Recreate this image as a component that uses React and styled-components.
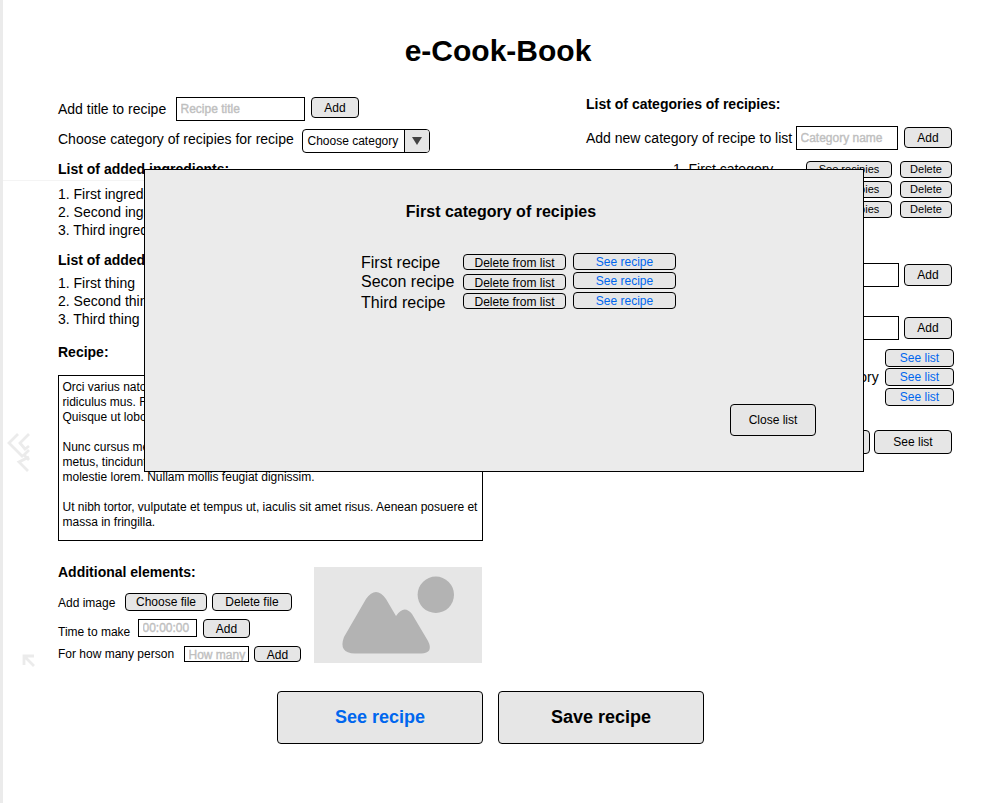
import React from "react";
import styled, { createGlobalStyle } from "styled-components";

const GlobalStyle = createGlobalStyle`
  body {
    margin: 0;
    background: #fff;
    color: #000;
    font: 14px/16px "Liberation Sans", Arial, sans-serif;
  }
  *, *::before, *::after { box-sizing: border-box; }
`;

const Page = styled.div`
  position: relative;
  width: 1000px;
  height: 803px;
  overflow: hidden;
  border-left: 3px solid #ebebeb;
`;

const Title = styled.h1`
  margin: 0;
  padding: 34px 7px 0 0;
  height: 96px;
  font-size: 30px;
  line-height: 34px;
  text-align: center;
`;

const Columns = styled.main`
  display: flex;
  justify-content: space-between;
  height: 595px;
  padding: 0 46px 0 55px;
`;

const LeftColumn = styled.section`
  width: 425px;
`;

const RightColumn = styled.section`
  width: 368px;
`;

const Heading = styled.h2`
  margin: ${(p) => p.$top || 0}px 0 0;
  font-size: 14px;
  line-height: 16px;
`;

const Row = styled.div`
  display: flex;
  align-items: flex-start;
  justify-content: ${(p) => (p.$end ? "flex-end" : "flex-start")};
  height: ${(p) => p.$h}px;
  padding-top: ${(p) => p.$top || 0}px;
  padding-right: ${(p) => p.$right || 0}px;
  white-space: nowrap;
`;

const Label = styled.span`
  width: ${(p) => p.$w}px;
  flex: none;
  padding-top: ${(p) => p.$drop || 0}px;
  font-size: ${(p) => p.$size || 14}px;
  line-height: ${(p) => (p.$size || 14) + 2}px;
`;

const Button = styled.button`
  flex: none;
  display: flex;
  align-items: center;
  justify-content: center;
  width: ${(p) => p.$w}px;
  height: ${(p) => p.$h}px;
  margin: ${(p) => p.$drop || 0}px 0 0 ${(p) => p.$gap || 0}px;
  padding: ${(p) => p.$sink || 0}px 0 0;
  border: 1px solid #000;
  border-radius: 4px;
  background: #e6e6e6;
  color: ${(p) => (p.$link ? "#0066ee" : "#000")};
  font: ${(p) => (p.$strong ? "bold " : "")}${(p) => p.$size || 12}px/1.17 "Liberation Sans", Arial, sans-serif;
  white-space: nowrap;
`;

const Input = styled.input`
  flex: none;
  width: ${(p) => p.$w}px;
  height: ${(p) => p.$h || 24}px;
  margin: 0;
  padding: ${(p) => p.$sink || 0}px 0 0 3.5px;
  border: 1px solid #000;
  border-radius: 0;
  background: #fff;
  font: 12px/14px "Liberation Sans", Arial, sans-serif;
  &::placeholder {
    color: #bfbfbf;
    opacity: 1;
    -webkit-text-stroke: 0.4px #bfbfbf;
  }
`;

const Select = styled.div`
  display: flex;
  width: 128px;
  height: 24px;
  border: 1px solid #000;
  border-radius: 4px;
  overflow: hidden;
  font-size: 12px;
  line-height: 22px;
`;

const SelectText = styled.span`
  flex: 1;
  padding-left: 4.5px;
`;

const SelectArrow = styled.span`
  display: flex;
  align-items: center;
  justify-content: center;
  width: 25px;
  border-left: 1px solid #000;
  background: #e6e6e6;
`;

const NumberedList = styled.ol`
  margin: ${(p) => p.$top}px 0 0;
  padding: 0;
  list-style: none;
  line-height: 18px;
`;

const RecipeText = styled.div`
  height: 166px;
  margin-top: 15px;
  padding: 4px 3.5px;
  border: 1px solid #000;
  font-size: 12px;
  line-height: 15px;
  white-space: nowrap;
  p { margin: 0 0 15px; }
`;

const Extras = styled.div`
  display: flex;
  justify-content: space-between;
  margin-top: 26px;
  padding-right: 1px;
`;

const ExtraFields = styled.div`
  padding-top: 26px;
`;

const Picture = styled.svg`
  display: block;
  width: 168px;
  height: 96px;
`;

const Footer = styled.footer`
  display: flex;
  gap: 15px;
  padding-left: 274px;
`;

const Modal = styled.div`
  position: absolute;
  left: 141px;
  top: 169px;
  width: 720px;
  height: 303px;
  padding-top: 33px;
  border: 1px solid #000;
  background: #ebebeb;
`;

const ModalTitle = styled.h2`
  margin: 0 0 31px;
  padding-right: 6px;
  font-size: 16px;
  line-height: 18px;
  text-align: center;
`;

const ModalRows = styled.div`
  height: 152px;
  padding-left: 216px;
`;

const ModalFooter = styled.div`
  display: flex;
  justify-content: flex-end;
  padding-right: 47px;
`;

const GuideLine = styled.div`
  position: absolute;
  left: -3px;
  top: 180px;
  width: 145px;
  height: 1px;
  background: #f4f4f4;
`;

const Arrows = styled.svg`
  position: absolute;
  left: ${(p) => p.$x}px;
  top: ${(p) => p.$y}px;
  fill: none;
  stroke: #ebebeb;
  stroke-width: 2.8;
`;

const recipes = [
  { name: "First recipe", h: 19, text: 2, del: 2, see: 1 },
  { name: "Secon recipe", h: 20, text: 2, del: 3, see: 1 },
  { name: "Third recipe", h: 20, text: 3, del: 2, see: 1 },
];

const categories = ["1. First category", "2. Second category", "3. Third category"];

export default function App() {
  return (
    <Page>
      <GlobalStyle />
      <Title>e-Cook-Book</Title>
      <Columns>
        <LeftColumn>
          <Row $h={33} $top={1}>
            <Label $w={118} $drop={4}>Add title to recipe</Label>
            <Input $w={129} placeholder="Recipe title" />
            <Button $w={48} $h={21} $gap={6} $sink={1}>Add</Button>
          </Row>
          <Row $h={32}>
            <Label $w={244} $drop={2}>Choose category of recipies for recipe</Label>
            <Select>
              <SelectText>Choose category</SelectText>
              <SelectArrow>
                <svg width="10" height="8"><path d="M0 0H10L5 8Z" fill="#444" /></svg>
              </SelectArrow>
            </Select>
          </Row>
          <Heading>List of added ingredients:</Heading>
          <NumberedList $top={8}>
            <li>1. First ingredient</li>
            <li>2. Second ingredient</li>
            <li>3. Third ingredient</li>
          </NumberedList>
          <Heading $top={13}>List of added things:</Heading>
          <NumberedList $top={6}>
            <li>1. First thing</li>
            <li>2. Second thing</li>
            <li>3. Third thing</li>
          </NumberedList>
          <Heading $top={16}>Recipe:</Heading>
          <RecipeText>
            <p>Orci varius natoque penatibus et magnis dis parturient<br />ridiculus mus. Fusce<br />Quisque ut lobortis</p>
            <p>Nunc cursus metus<br />metus, tincidunt<br />molestie lorem. Nullam mollis feugiat dignissim.</p>
            <p>Ut nibh tortor, vulputate et tempus ut, iaculis sit amet risus. Aenean posuere et<br />massa in fringilla.</p>
          </RecipeText>
          <Extras>
            <ExtraFields>
              <Heading $top={-29}>Additional elements:</Heading>
              <Row $h={39} $top={13}>
                <Label $w={67} $drop={3} $size={12}>Add image</Label>
                <Button $w={82} $h={18}>Choose file</Button>
                <Button $w={80} $h={18} $gap={5}>Delete file</Button>
              </Row>
              <Row $h={27}>
                <Label $w={80} $drop={6} $size={12}>Time to make</Label>
                <Input $w={59} $h={18} placeholder="00:00:00" />
                <Button $w={47} $h={19} $gap={6} $sink={1}>Add</Button>
              </Row>
              <Row $h={16}>
                <Label $w={126} $drop={1} $size={12}>For how many person</Label>
                <Input $w={65} $h={16} $sink={1} placeholder="How many" />
                <Button $w={47} $h={16} $gap={5} $sink={2}>Add</Button>
              </Row>
            </ExtraFields>
            <Picture viewBox="0 0 168 96">
              <rect width="168" height="96" fill="#e6e6e6" />
              <circle cx="121.800" cy="27.800" r="18.2" fill="#b3b3b3" />
              <path d="M30 70 52 32Q62 18 72 32L82 49Q90 37 98 47L114 74Q120 86 107 86.500H41Q24 86 30 70Z" fill="#b3b3b3" />
            </Picture>
          </Extras>
        </LeftColumn>
        <RightColumn>
          <Heading>List of categories of recipies:</Heading>
          <Row $h={49} $top={14}>
            <Label $w={210} $drop={4}>Add new category of recipe to list</Label>
            <Input $w={102} placeholder="Category name" />
            <Button $w={48} $h={21} $gap={6} $drop={1} $sink={1}>Add</Button>
          </Row>
          {categories.map((name) => (
            <Row key={name} $h={20} $end $right={2}>
              <Label $w={133}>{name}</Label>
              <Button $w={86} $h={17} $size={11}>See recipies</Button>
              <Button $w={52} $h={17} $gap={8} $size={11}>Delete</Button>
            </Row>
          ))}
          <Row $h={95} $top={42} $end $right={2}>
            <Input $w={102} />
            <Button $w={48} $h={22} $gap={5} $drop={1}>Add</Button>
          </Row>
          <Row $h={33} $end $right={2}>
            <Input $w={102} />
            <Button $w={48} $h={22} $gap={5} $drop={1}>Add</Button>
          </Row>
          {categories.map((name, i) => (
            <Row key={name} $h={i === 0 ? 19 : 20} $end>
              <Label $w={127} $drop={1}>{name}</Label>
              <Button $w={69} $h={18} $link>See list</Button>
            </Row>
          ))}
          <Row $h={46} $top={22} $end $right={2}>
            <Button $w={78} $h={24}>Add</Button>
            <Button $w={78} $h={24} $gap={4}>See list</Button>
          </Row>
        </RightColumn>
      </Columns>
      <Footer>
        <Button $w={206} $h={53} $size={18} $strong $link>See recipe</Button>
        <Button $w={206} $h={53} $size={18} $strong>Save recipe</Button>
      </Footer>
      <GuideLine />
      <Arrows $x={4} $y={432} width="26" height="42" viewBox="0 0 26 42">
        <path d="M11 2 2 11 16 25 M22 2 13 11 18 17 22 14 M22 18 17 23 22 28 M22 25 12 30 21 39" />
      </Arrows>
      <Arrows $x={19} $y={653} width="14" height="14" viewBox="0 0 14 14">
        <path d="M2 12V3H12 M2 3 12 13" />
      </Arrows>
      <Modal role="dialog">
        <ModalTitle>First category of recipies</ModalTitle>
        <ModalRows>
          {recipes.map((r) => (
            <Row key={r.name} $h={r.h}>
              <Label $w={102} $size={16} $drop={r.text}>{r.name}</Label>
              <Button $w={103} $h={16} $drop={r.del} $sink={2}>Delete from list</Button>
              <Button $w={103} $h={17} $gap={7} $drop={r.see} $sink={1} $link>See recipe</Button>
            </Row>
          ))}
        </ModalRows>
        <ModalFooter>
          <Button $w={86} $h={32}>Close list</Button>
        </ModalFooter>
      </Modal>
    </Page>
  );
}
